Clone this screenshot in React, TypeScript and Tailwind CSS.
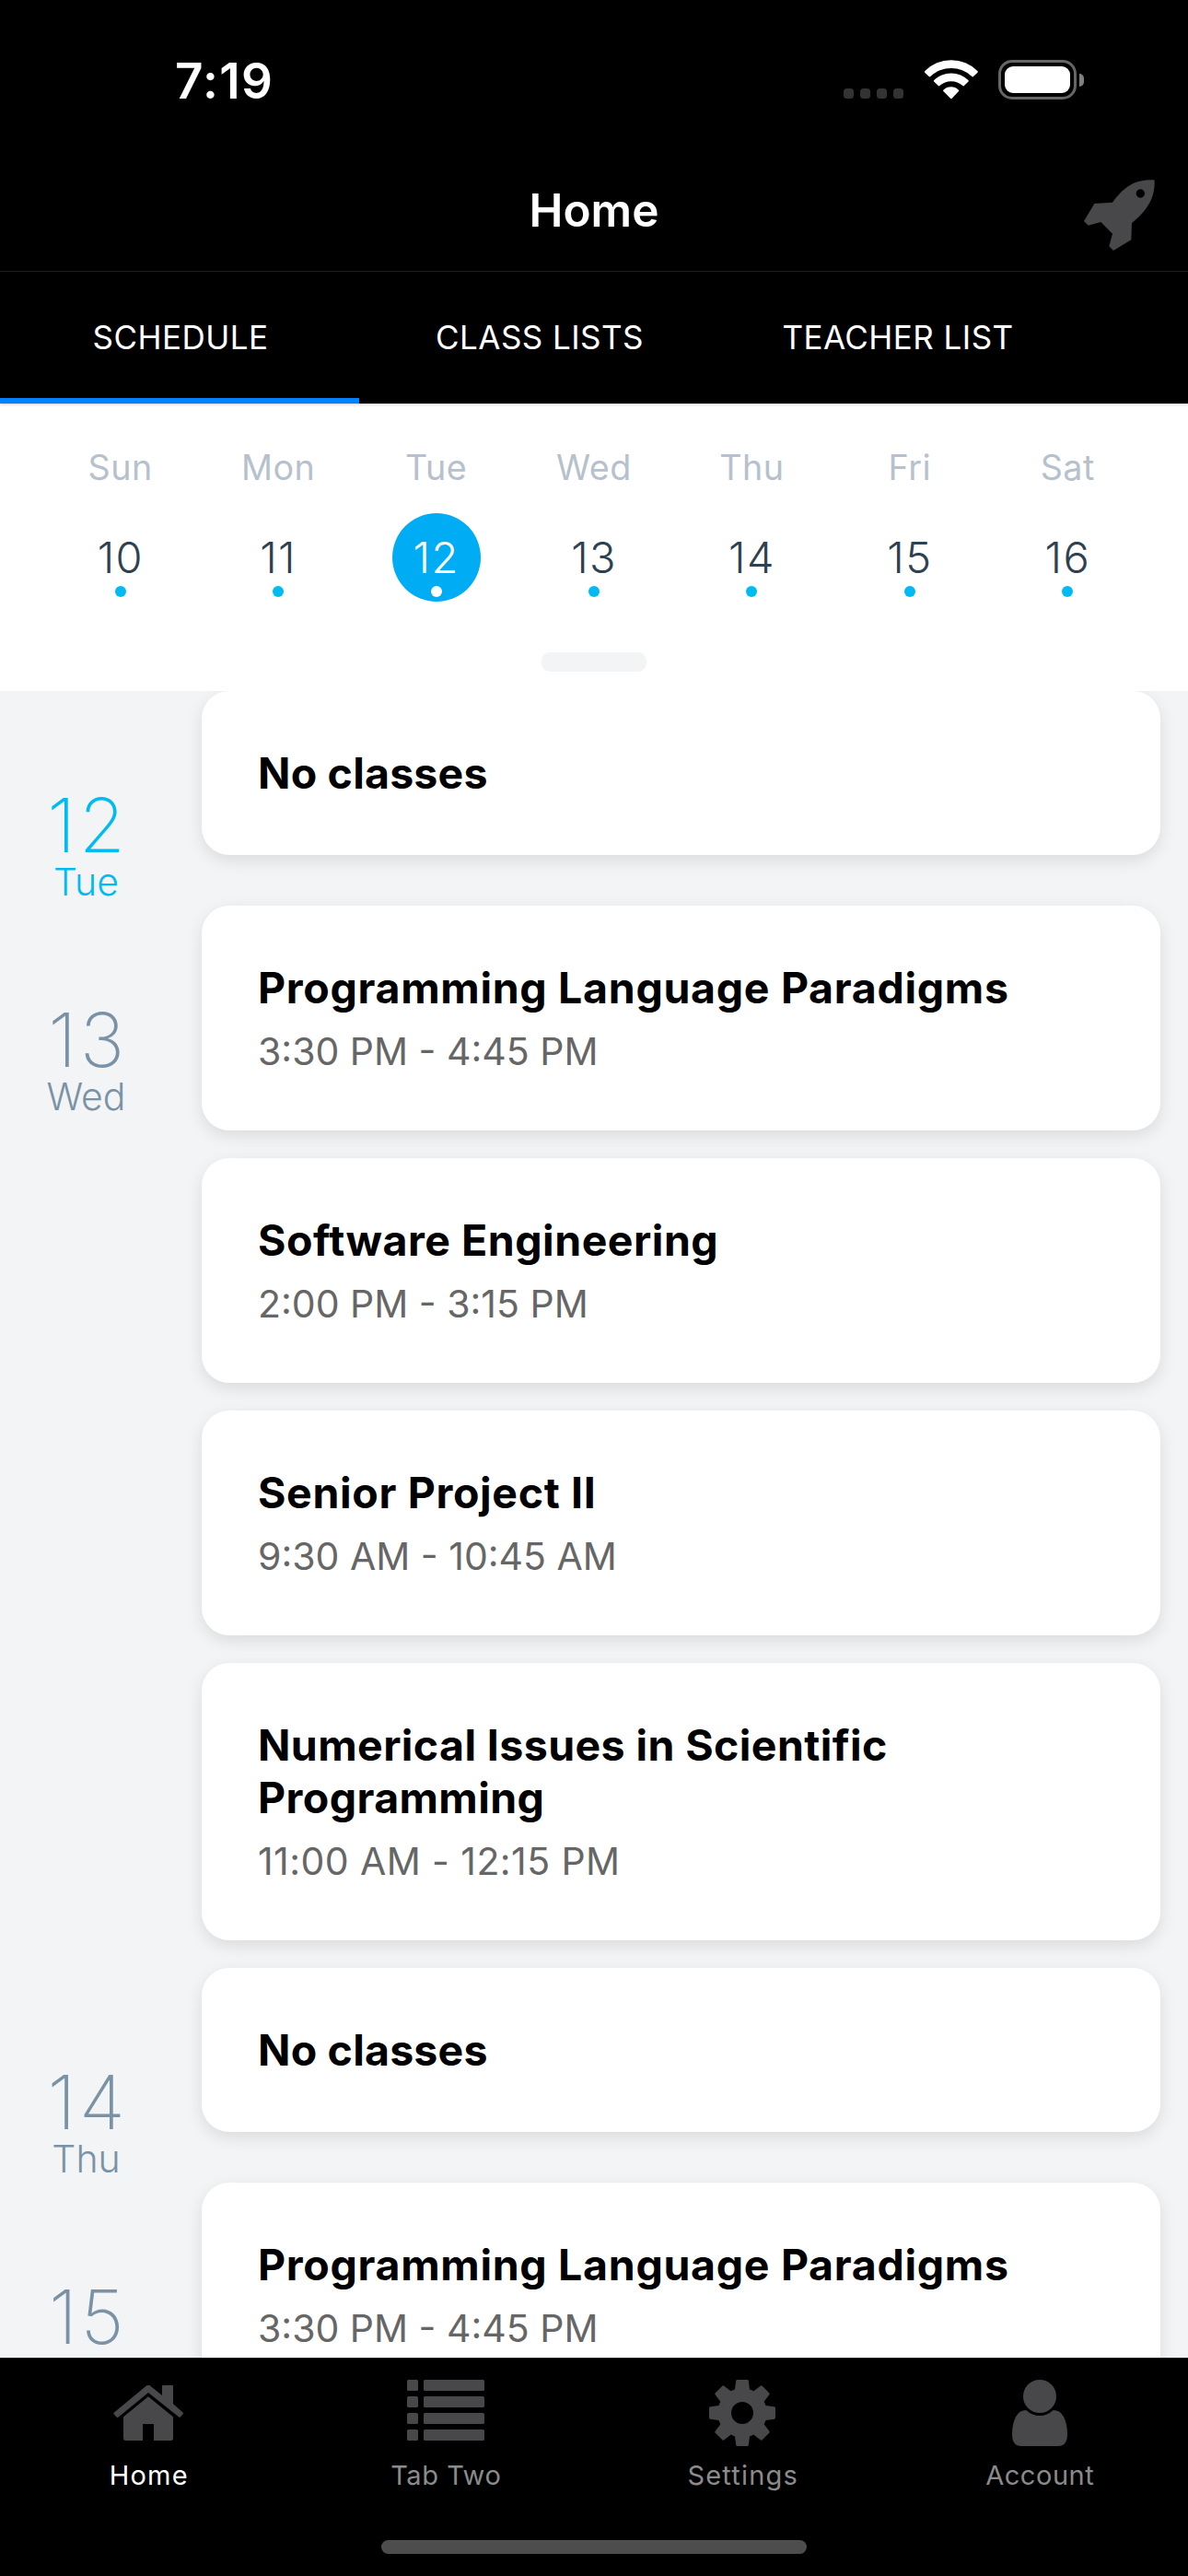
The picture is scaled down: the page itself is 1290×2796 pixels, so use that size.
import React from "react";

const weekDays = [
  { name: "Sun", num: "10" },
  { name: "Mon", num: "11" },
  { name: "Tue", num: "12", selected: true },
  { name: "Wed", num: "13" },
  { name: "Thu", num: "14" },
  { name: "Fri", num: "15" },
  { name: "Sat", num: "16" },
];

type Item = { title: string; time?: string; titleSpacing?: string; timeSpacing?: string };
type Day = { num: string; name: string; today?: boolean; items: Item[] };

const agenda: Day[] = [
  { num: "12", name: "Tue", today: true, items: [{ title: "No classes", titleSpacing: "tracking-[0.2px]" }] },
  {
    num: "13",
    name: "Wed",
    items: [
      { title: "Programming Language Paradigms", titleSpacing: "tracking-[0.68px]", time: "3:30 PM - 4:45 PM" },
      { title: "Software Engineering", titleSpacing: "tracking-[0.5px]", time: "2:00 PM - 3:15 PM" },
      { title: "Senior Project II", titleSpacing: "tracking-[0.65px]", time: "9:30 AM - 10:45 AM" },
      {
        title: "Numerical Issues in Scientific Programming",
        titleSpacing: "tracking-[0.4px]",
        time: "11:00 AM - 12:15 PM",
        timeSpacing: "tracking-[0.42px]",
      },
    ],
  },
  { num: "14", name: "Thu", items: [{ title: "No classes", titleSpacing: "tracking-[0.2px]" }] },
  {
    num: "15",
    name: "Fri",
    items: [{ title: "Programming Language Paradigms", titleSpacing: "tracking-[0.68px]", time: "3:30 PM - 4:45 PM" }],
  },
];

function WifiIcon() {
  return (
    <svg viewBox="311 75 173 127" className="h-[42.3px] w-[57.7px] fill-white">
      <path d="M311 112A121 121 0 0 1 484 112Q485 115 483 117L469 130Q467 131 465 129A98 98 0 0 0 330 129Q328 131 326 130L312 117Q310 115 311 112Z" />
      <path d="M341 142A79 79 0 0 1 454 142Q455 144 453 146L439 160Q437 161 435 159A57 57 0 0 0 360 159Q358 161 356 160L342 146Q340 144 341 142Z" />
      <path d="M372 173A36 36 0 0 1 422 173Q424 175 422 177L400 200Q397.500 203 395 200L372 177Q370 175 372 173Z" />
    </svg>
  );
}

function Battery() {
  return (
    <div className="flex items-center">
      <div className="flex h-[43px] w-[85px] items-center justify-center rounded-[15px] border-[3px] border-[#666]">
        <div className="h-[29px] w-[71px] rounded-[9px] bg-white" />
      </div>
      <div className="ml-[3px] h-[14px] w-[5px] rounded-r-full bg-[#808080]" />
    </div>
  );
}

function RocketIcon() {
  return (
    <svg viewBox="52 47 231 231" className="h-[77px] w-[77px] fill-[#48484a]">
      <path
        fillRule="evenodd"
        d="M279 48Q282 48 282 51C283 100 266 141 208 188L206 243L148 278L134 264L145 223L107 185L66 196L52 182L86 125L145 121C188 63 222 47 279 48ZM236 78a14 14 0 1 0 0.010 0Z"
      />
    </svg>
  );
}

function HomeIcon() {
  return (
    <svg viewBox="39 57 228 180" className="mt-[6px] h-[60px] w-[76px] fill-[#48484a]">
      <path d="M41 146L146 59Q153 54 160 59L198 90V60q0-3 3-3h30q3 0 3 3V118L265 145Q268 148 266 151L258 160Q255 163 252 160L153 81L55 161Q52 163 49 160L41 151Q38 149 41 146Z" />
      <path d="M153 94L234 160V230q0 7-7 7H171V183H135V237H79q-7 0-7-7V160Z" />
    </svg>
  );
}

function ListIcon() {
  return (
    <svg viewBox="0 0 84 66" className="h-[66px] w-[84px] fill-[#48484a]">
      {[0, 18, 36, 54].map((y) => (
        <g key={y}>
          <rect x="0" y={y} width="12" height="12" rx="1.500" />
          <rect x="18" y={y} width="66" height="12" rx="1.500" />
        </g>
      ))}
    </svg>
  );
}

function GearIcon() {
  return (
    <svg viewBox="-108 -108 216 216" className="h-[72px] w-[72px] fill-[#48484a]">
      <circle r="58" fill="none" stroke="#48484a" strokeWidth="44" />
      {[0, 45, 90, 135, 180, 225, 270, 315].map((a) => (
        <path key={a} transform={`rotate(${a})`} d="M-27 -62L-24 -77L-20.500 -104Q-20 -108 -16 -108H16Q20 -108 20.500 -104L24 -77L27 -62Z" />
      ))}
    </svg>
  );
}

function PersonIcon() {
  return (
    <svg viewBox="1047 39 180 216" className="h-[72px] w-[60px] fill-[#48484a]">
      <circle cx="1137" cy="93" r="54" />
      <path d="M1093 138Q1112 156 1137 156Q1162 156 1181 138Q1204 138 1215 160Q1227 183 1227 217Q1227 255 1197 255H1077Q1047 255 1047 217Q1047 183 1059 160Q1070 138 1093 138Z" />
    </svg>
  );
}

const bottomTabs = [
  { label: "Home", icon: <HomeIcon />, style: "text-white tracking-[1.2px]" },
  { label: "Tab Two", icon: <ListIcon />, style: "text-[#8b8b8c] tracking-[0.55px]" },
  { label: "Settings", icon: <GearIcon />, style: "text-[#8b8b8c] tracking-[1.2px]" },
  { label: "Account", icon: <PersonIcon />, style: "text-[#8b8b8c] tracking-[0.55px]" },
];

function ClassCard({ item }: { item: Item }) {
  return (
    <div className="rounded-[30px] bg-white pt-[61px] pr-[60px] pb-[60px] pl-[61px] shadow-[0_6px_18px_rgba(0,0,0,0.1)]">
      <h2 className={`w-[860px] text-[46.5px] leading-[57px] font-bold text-black ${item.titleSpacing ?? ""}`}>{item.title}</h2>
      {item.time && <p className={`mt-[15px] text-[41px] leading-[51px] text-[#666] ${item.timeSpacing ?? ""}`}>{item.time}</p>}
    </div>
  );
}

function DaySection({ day }: { day: Day }) {
  return (
    <section className="flex min-h-[233px] shrink-0 items-start pr-[30px]">
      <div className={`w-[186px] shrink-0 pt-[106px] text-center ${day.today ? "text-[#00bbf2]" : "text-[#7a92a5]"}`}>
        <div className="pl-[5px] text-[81.5px] leading-[80px] font-extralight tracking-[3.5px]">{day.num}</div>
        <div className="pl-[1px] text-[41px] leading-[42px] font-light">{day.name}</div>
      </div>
      <div className="ml-[33px] flex flex-1 flex-col gap-[30px] pb-[30px]">
        {day.items.map((item) => (
          <ClassCard key={item.title} item={item} />
        ))}
      </div>
    </section>
  );
}

export default function App() {
  return (
    <div className="flex h-[2796px] w-[1290px] flex-col overflow-hidden bg-black font-[Inter,sans-serif]">
      <header className="shrink-0 border-b border-[#202021]">
        <div className="flex h-[162px] justify-between pr-[113px] pl-[190px]">
          <div className="pt-[58px] text-[53px] leading-[60px] font-semibold tracking-[1.3px] text-white">7:19</div>
          <div className="flex items-start pt-[65px]">
            <div className="mt-[31px] flex gap-[7px]">
              {[0, 1, 2, 3].map((i) => (
                <span key={i} className="h-[11px] w-[11px] rounded-[3.5px] bg-[#333]" />
              ))}
            </div>
            <div className="ml-[23px]">
              <WifiIcon />
            </div>
            <div className="ml-[22.500px]">
              <Battery />
            </div>
          </div>
        </div>
        <div className="grid h-[132px] grid-cols-[1fr_auto_1fr] items-center">
          <span />
          <h1 className="text-[49.5px] leading-[60px] font-semibold text-white">Home</h1>
          <div className="mt-[11px] flex justify-end pr-[36px]">
            <RocketIcon />
          </div>
        </div>
      </header>

      <nav className="relative z-10 flex h-[143px] shrink-0 bg-black text-[35px] tracking-[0.45px] text-white shadow-[0_1px_3px_rgba(0,0,0,0.2)]">
        <div className="relative flex w-[390px] items-center justify-center pl-[2px]">
          SCHEDULE
          <span className="absolute inset-x-0 bottom-0 h-[6px] bg-[#0082ff]" />
        </div>
        <div className="flex w-[390px] items-center justify-center pl-[2px]">CLASS LISTS</div>
        <div className="flex w-[390px] items-center justify-center">TEACHER LIST</div>
      </nav>

      <section className="flex h-[312px] shrink-0 flex-col items-center bg-white px-[45px] pt-[45px]">
        <div className="grid w-full grid-cols-7">
          {weekDays.map((d) => (
            <div key={d.name} className="flex flex-col items-center">
              <div className="text-[37.7px] leading-[48px] tracking-[0.5px] text-[#b6c1cd]">{d.name}</div>
              <div
                className={`relative mt-[26px] flex h-[96px] w-[96px] items-center justify-center rounded-full text-[47px] font-light tracking-[1.3px] ${
                  d.selected ? "bg-[#00adf5] text-white" : "text-[#2d4150]"
                }`}
              >
                {d.num}
                <span className={`absolute bottom-[5px] left-[42px] h-[12px] w-[12px] rounded-full ${d.selected ? "bg-white" : "bg-[#00bbf2]"}`} />
              </div>
            </div>
          ))}
        </div>
        <div className="mt-[55px] h-[21px] w-[114px] rounded-[9px] bg-[#f2f4f5]" />
      </section>

      <main className="flex h-[1809px] shrink-0 flex-col overflow-hidden bg-[#f2f4f5]">
        {agenda.map((day) => (
          <DaySection key={day.num} day={day} />
        ))}
      </main>

      <footer className="flex flex-1 flex-col items-center border-t border-[#222223] bg-black pt-[23px]">
        <div className="grid w-full grid-cols-4">
          {bottomTabs.map((t) => (
            <div key={t.label} className="flex flex-col items-center">
              <div className="flex h-[72px] items-start">{t.icon}</div>
              <div className={`mt-[15px] pl-[1px] text-[29px] leading-[34px] ${t.style}`}>{t.label}</div>
            </div>
          ))}
        </div>
        <div className="mt-[53px] h-[15px] w-[462px] rounded-full bg-[#4d4d4d]" />
      </footer>
    </div>
  );
}
